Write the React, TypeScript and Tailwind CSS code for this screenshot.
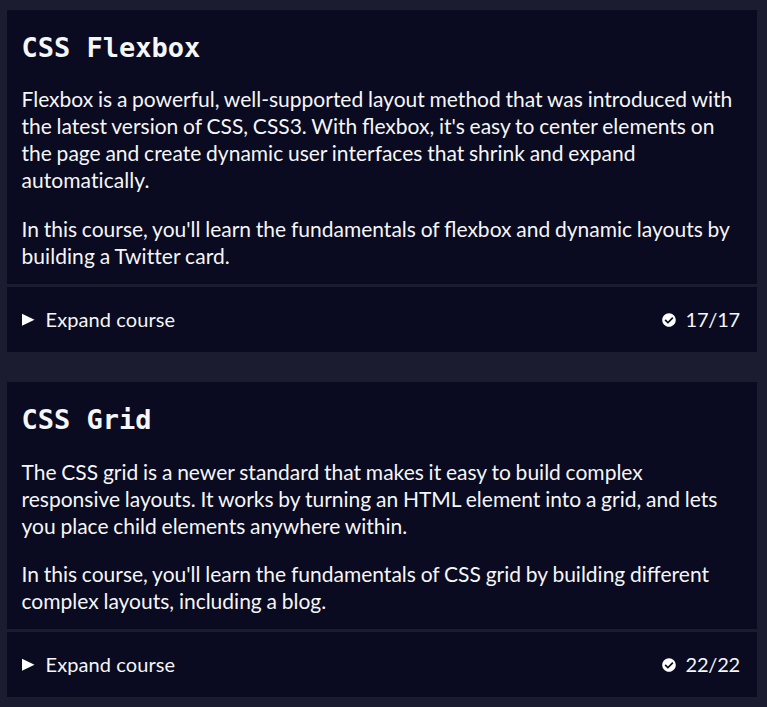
import type { ReactNode } from "react";

function Plain({ children }: { children: ReactNode }) {
  return <span className="tracking-[0.06px] [font-variant-ligatures:none]">{children}</span>;
}

const courses = [
  {
    title: "CSS Flexbox",
    spacing: "mt-[22px] gap-[22px] pb-[15px]",
    text: [
      <>
        Flexbox is a powerful, well-supported layout method that was introduced with the latest version of CSS, CSS3. With
        flexbox, it's easy to center elements on the page and create dynamic user interfaces that shrink and expand{" "}
        <Plain>automatically.</Plain>
      </>,
      <>
        In this course, you'll learn the fundamentals of flexbox and dynamic layouts by{" "}
        <Plain>building a Twitter card.</Plain>
      </>,
    ],
    progress: "17/17",
  },
  {
    title: "CSS Grid",
    spacing: "mt-[23px] gap-[21px] pb-[15px]",
    text: [
      <>
        The CSS grid is a newer standard that makes it easy to build complex responsive layouts. It works by turning an HTML
        element into a grid, and lets you place child elements anywhere within.
      </>,
      <>
        In this course, you'll learn the fundamentals of CSS grid by building different complex layouts, including a blog.
      </>,
    ],
    progress: "22/22",
  },
];

export default function App() {
  return (
    <main className="flex h-[707px] flex-col gap-[30px] overflow-hidden bg-[#1c1c30] pt-[10px] pr-[10px] pl-[7px] font-[Lato,sans-serif] text-[21px] leading-[27px] text-[#f5f6f7]">
      {courses.map((course) => (
        <section key={course.title} className="bg-[#0a0a20]">
          <div className="pt-[23px] pr-[15px] pl-[14.5px]">
            <h2 className="font-['DejaVu_Sans_Mono',monospace] text-[27px] leading-[30px] font-bold">{course.title}</h2>
            <div className={`flex flex-col [word-spacing:-0.6px] ${course.spacing}`}>
              {course.text.map((p, i) => (
                <p key={i}>{p}</p>
              ))}
            </div>
          </div>
          <button className="flex h-[68px] w-full items-center border-t-[3px] border-[#1c1c30] pr-[17px] pl-[15px] text-left">
            <svg className="mr-[10.5px] h-[13px] w-[13px]" viewBox="0 0 13 13" fill="white">
              <path d="M0 0.8 12.5 6.8 0 12.8Z" />
            </svg>
            <span className="grow text-[20px] tracking-[0.1px]">Expand course</span>
            <svg className="mr-[9.5px] h-[14px] w-[14px]" viewBox="0 0 512 512" fill="white">
              <path d="M504 256c0 137-111 248-248 248S8 393 8 256 119 8 256 8s248 111 248 248zM227 387l184-184c6-6 6-16 0-22l-22-23c-7-6-17-6-23 0L216 308l-70-70c-6-6-16-6-23 0l-22 23c-6 6-6 16 0 22l104 104c6 7 16 7 22 0z" />
            </svg>
            <span className="text-[20px] tracking-[-0.2px]">{course.progress}</span>
          </button>
        </section>
      ))}
    </main>
  );
}
